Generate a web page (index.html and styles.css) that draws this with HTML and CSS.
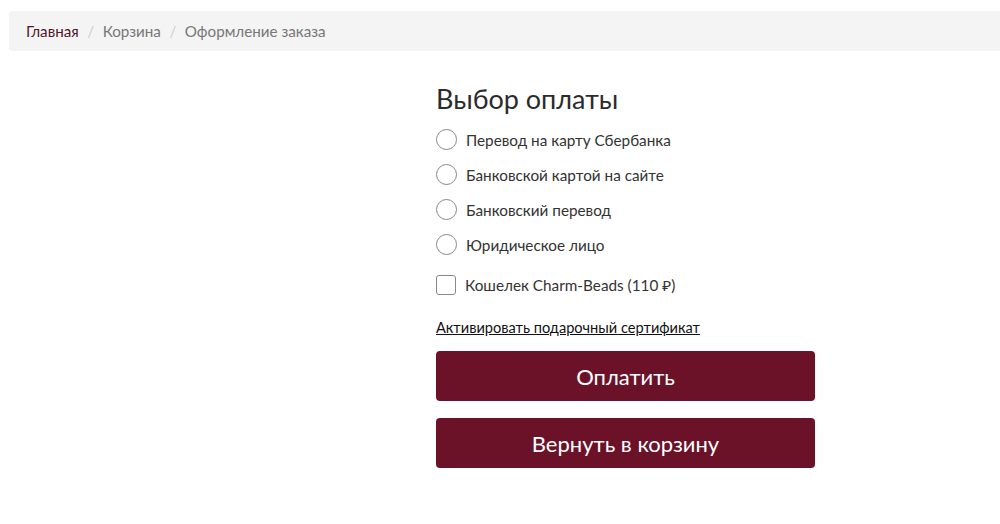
FILE: index.html
```html
<!DOCTYPE html>
<html lang="ru">
<head>
  <meta charset="UTF-8">
  <meta name="viewport" content="width=device-width, initial-scale=1.0">
  <title>Оформление заказа</title>
  <link rel="stylesheet" href="styles.css">
</head>
<body>
  <nav class="breadcrumbs">
    <a href="#" class="crumb crumb-home">Главная</a>
    <span class="sep">/</span>
    <a href="#" class="crumb">Корзина</a>
    <span class="sep">/</span>
    <span class="crumb">Оформление заказа</span>
  </nav>

  <div class="checkout">
    <div class="aside"></div>
    <div class="payment">
      <h1>Выбор оплаты</h1>

      <label class="option">
        <input type="radio" name="pay">
        <span class="radio"></span>
        Перевод на карту Сбербанка
      </label>
      <label class="option">
        <input type="radio" name="pay">
        <span class="radio"></span>
        Банковской картой на сайте
      </label>
      <label class="option">
        <input type="radio" name="pay">
        <span class="radio"></span>
        Банковский перевод
      </label>
      <label class="option">
        <input type="radio" name="pay">
        <span class="radio"></span>
        Юридическое лицо
      </label>

      <label class="option wallet">
        <input type="checkbox">
        <span class="check"></span>
        Кошелек Charm-Beads (110 ₽)
      </label>

      <a href="#" class="gift">Активировать подарочный сертификат</a>

      <button class="btn">Оплатить</button>
      <button class="btn">Вернуть в корзину</button>
    </div>
  </div>
</body>
</html>
```

FILE: styles.css
```css
body {
  margin: 0;
  background-color: #fff;
  font-family: Lato, 'Noto Sans', sans-serif;
  color: #333;
}
.breadcrumbs {
  margin: 11px 0 0 9px;
  height: 40px;
  padding-left: 17px;
  background-color: #f4f4f4;
  border-radius: 4px 0 0 4px;
  display: flex;
  align-items: center;
  gap: 8.5px;
  font-size: 15.2px;
}
.crumb {
  color: #777;
  text-decoration: none;
}
.crumb-home {
  color: #521628;
}
.sep {
  color: #cfcfcf;
}
.checkout {
  display: grid;
  grid-template-columns: 436px 379px;
}
.payment {
  display: flex;
  flex-direction: column;
  padding-top: 31px;
}
h1 {
  margin: 0 0 7px;
  font-size: 27px;
  font-weight: 400;
  color: #2b2b2b;
}
.option {
  display: flex;
  align-items: center;
  gap: 9px;
  height: 35px;
  font-size: 15.3px;
  color: #333;
  cursor: pointer;
}
.option input {
  display: none;
}
.radio {
  width: 19px;
  height: 19px;
  border: 1px solid #888;
  border-radius: 50%;
}
.check {
  width: 18px;
  height: 18px;
  border: 1px solid #888;
  border-radius: 3px;
}
.wallet {
  margin-top: 5px;
}
.gift {
  align-self: flex-start;
  margin-top: 17px;
  font-size: 14.6px;
  color: #111;
}
.btn {
  margin-top: 15px;
  height: 50px;
  border: none;
  border-radius: 4px;
  background-color: #6b1229;
  color: #fff;
  font-family: inherit;
  font-size: 22px;
  cursor: pointer;
}
.btn + .btn {
  margin-top: 17px;
}
```
